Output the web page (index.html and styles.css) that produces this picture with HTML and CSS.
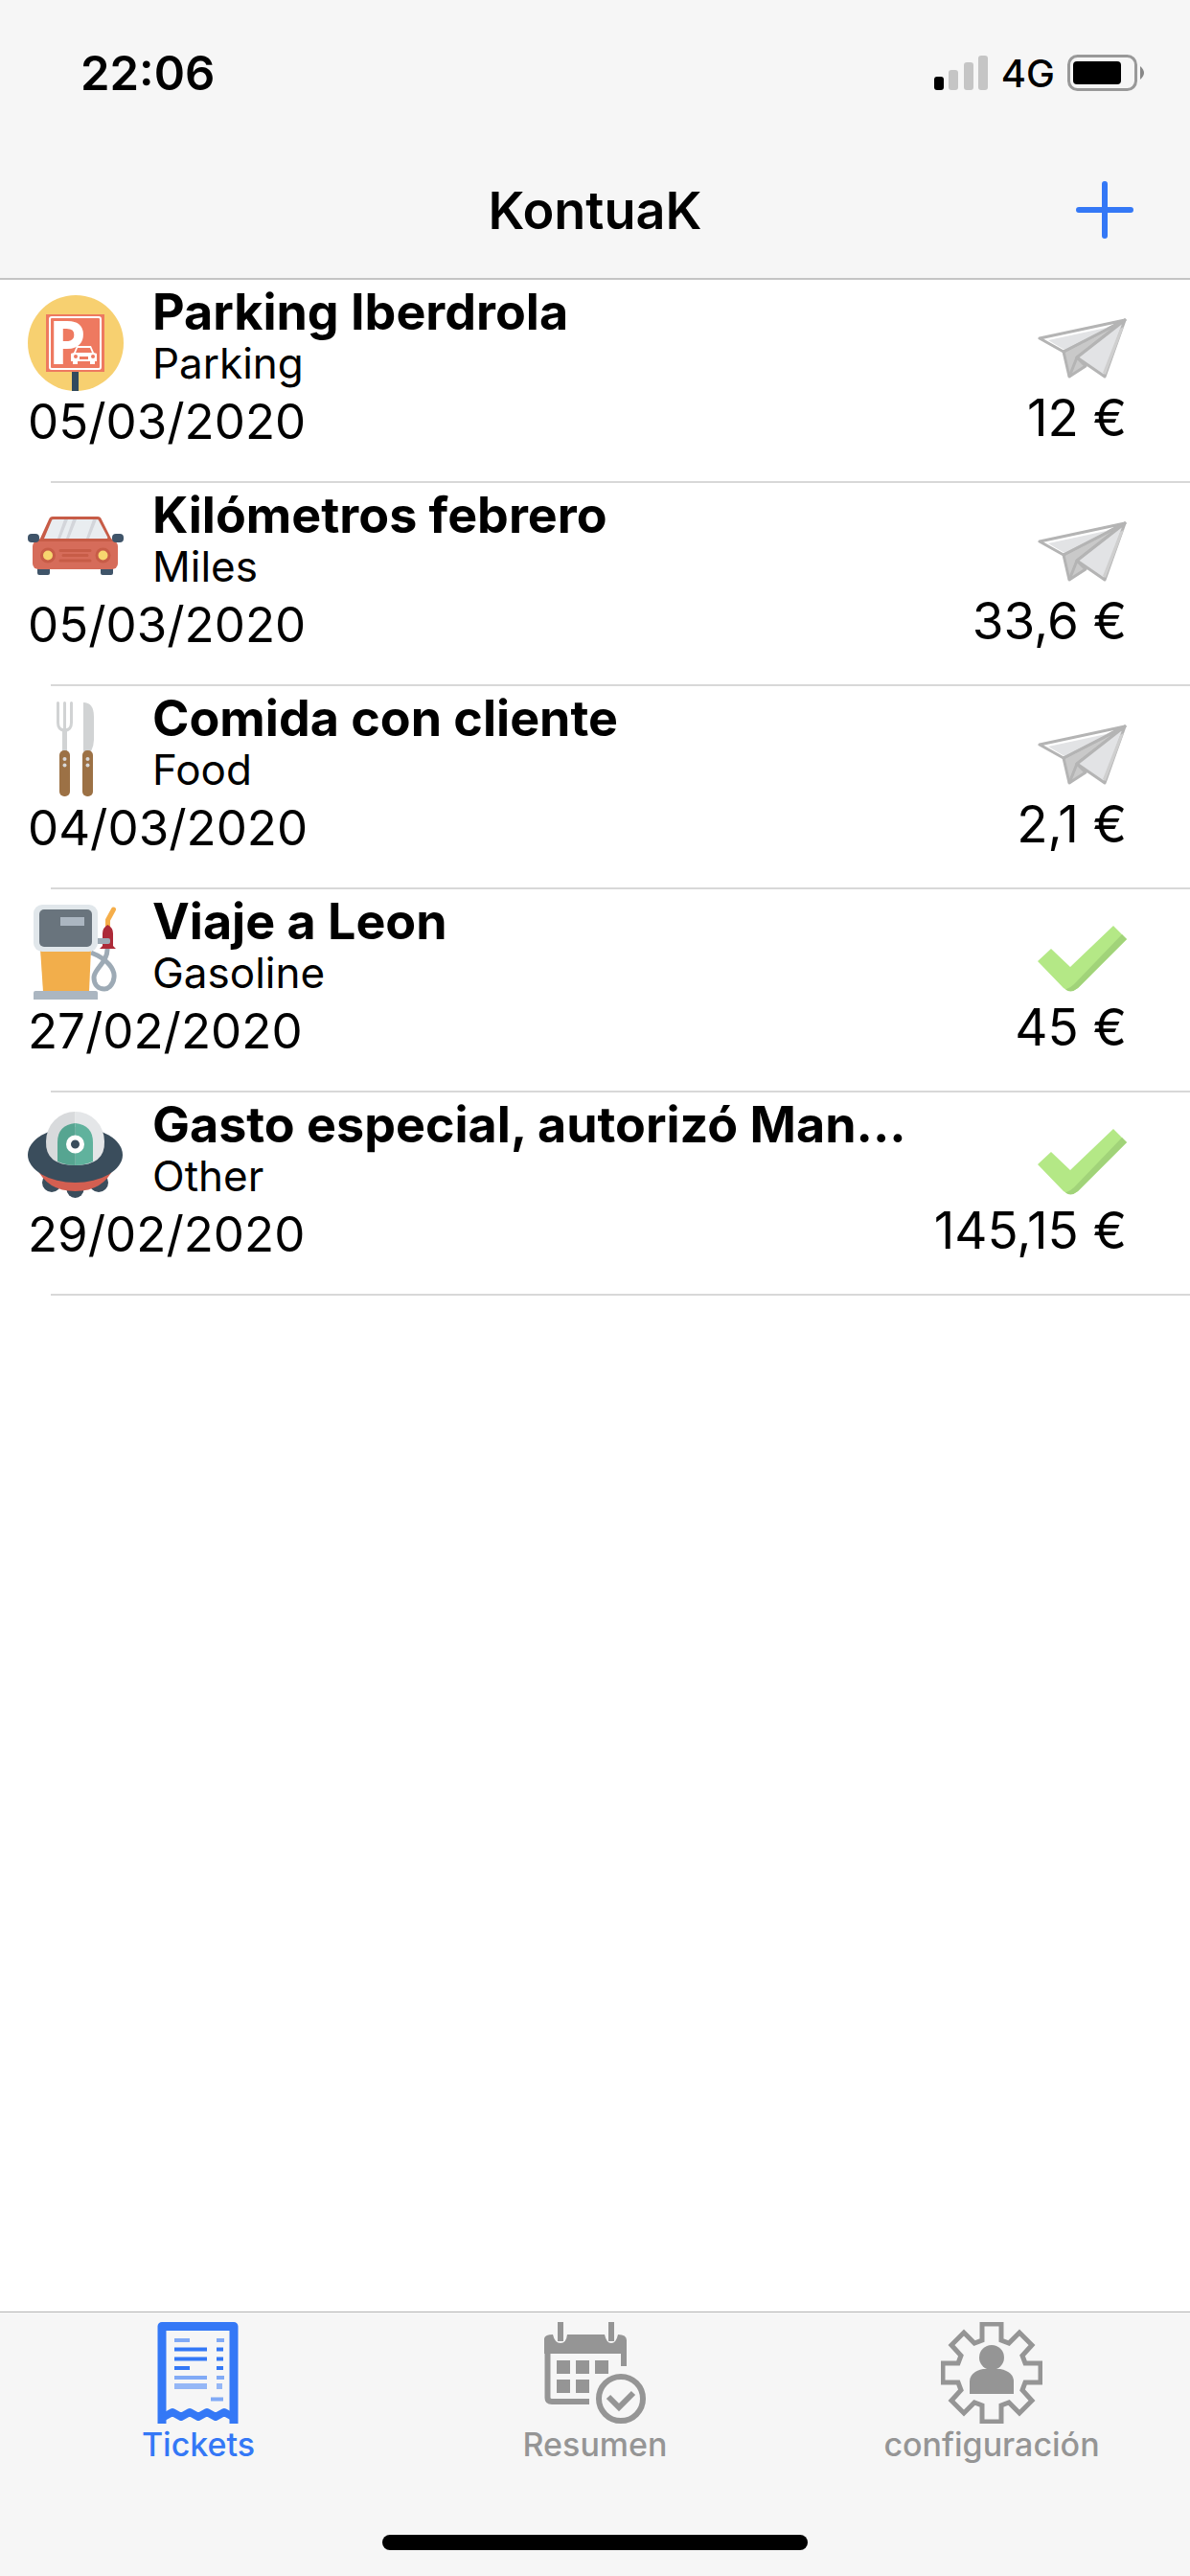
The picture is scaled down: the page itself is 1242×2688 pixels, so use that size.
FILE: index.html
```html
<!DOCTYPE html>
<html lang="es">
	<head>
		<meta charset="UTF-8">
		<meta name="viewport" content="width=device-width, initial-scale=1">
		<title>KontuaK</title>
		<link rel="stylesheet" href="styles.css">
	</head>
	<body>
		<!-- shared icons -->
		<svg class="defs" width="0" height="0">
			<symbol id="plane" viewBox="0 0 93 86">
				<g stroke="#b4b4b4" stroke-width="3" stroke-linejoin="round">
					<path fill="#fff" d="M2 36L91 17L27 50z"/>
					<path fill="#c9c9c9" d="M27 50L91 17L41 56L50 65L33 76z"/>
					<path fill="#e2e3e5" d="M41 56L91 17L70 76z"/>
				</g>
				<path fill="#e2e3e5" d="M11 38L76 24L28 48z"/>
				<path fill="none" stroke="#b4b4b4" stroke-width="3" d="M33 76L41 56M91 17L27 50"/>
				<path fill="#cfcfcf" d="M86 26L68 72L71 74L90 24z"/>
			</symbol>
			<symbol id="check" viewBox="0 0 93 86">
				<path fill="#b4e886" d="M0 50L14 37L34 56L79 13L93 27L42 78Q34 84 27 78z"/>
				<path fill="#a1d379" d="M88 22L93 27L42 78Q35 84 29 79.500Q34 78 38 74z"/>
			</symbol>
		</svg>

		<header class="header">
			<div class="status">
				<span class="time">22:06</span>
				<div class="status-right">
					<svg class="signal" viewBox="0 0 57 36">
						<rect x="0" y="22" width="10" height="14" rx="3"/>
						<g fill="#c5c5c5">
							<rect x="15" y="15" width="10" height="21" rx="3"/>
							<rect x="31" y="7" width="10" height="29" rx="3"/>
							<rect x="46" y="0" width="10" height="36" rx="3"/>
						</g>
					</svg>
					<span class="network">4G</span>
					<svg class="battery" viewBox="0 0 82 38">
						<rect x="1.500" y="1.500" width="70" height="35" rx="9" fill="none" stroke="#999" stroke-width="3"/>
						<rect x="6" y="7" width="50" height="24" rx="4"/>
						<path d="M76 12Q84 19 76 26z" fill="#888"/>
					</svg>
				</div>
			</div>
			<div class="nav">
				<h1>KontuaK</h1>
				<button class="add" type="button" aria-label="Añadir">
					<svg viewBox="0 0 60 60"><path d="M30 3V57M3 30H57"/></svg>
				</button>
			</div>
		</header>

		<main class="main">
			<ul class="list">
				<li class="item">
					<div class="row">
						<div class="left">
							<div class="head">
								<svg class="icon" viewBox="0 0 100 100">
									<circle cx="50" cy="50" r="50" fill="#f7d070"/>
									<rect x="46" y="79" width="7" height="21" fill="#324a5e"/>
									<rect x="19" y="20" width="61" height="60" fill="#ee7960"/>
									<rect x="23" y="23" width="53" height="54" rx="2" fill="none" stroke="#fff" stroke-width="2"/>
									<text class="sign" x="22" y="72">P</text>
									<path fill="#fff" d="M45 61L48 60L51 53H66L69 60L72 61V69H70V72H65V69H52V72H47V69H45z"/>
									<path fill="#ee7960" d="M50 60L52 55H65L67 60zM54 64H63V67H54z"/>
									<circle cx="50" cy="64" r="2" fill="#ee7960"/>
									<circle cx="68" cy="64" r="2" fill="#ee7960"/>
								</svg>
								<div class="text">
									<h2>Parking Iberdrola</h2>
									<p>Parking</p>
								</div>
							</div>
							<time datetime="2020-03-05">05/03/2020</time>
						</div>
						<div class="right">
							<svg class="state"><use href="#plane"/></svg>
							<span class="amount">12 €</span>
						</div>
					</div>
				</li>
				<li class="item">
					<div class="row">
						<div class="left">
							<div class="head">
								<svg class="icon" viewBox="0 0 100 100">
									<path fill="#3f5469" d="M10 72H23V78Q23 80 21 80H12Q10 80 10 78zM76 72H89V78Q89 80 87 80H78Q76 80 76 78z"/>
									<path fill="#c75c47" d="M12 44L22 22Q23 19 26 19H73Q76 19 77 22L88 44V50H12z"/>
									<path fill="#e9edf0" d="M17 42L25 23Q25 22 27 22H72Q74 22 74 23L83 40Q84 42 82 42z"/>
									<path fill="#d3d5da" d="M38 22H42L34 42H31zM47 22H51L43 42H40zM68 22H72L64 42H61z"/>
									<rect x="5" y="44" width="89" height="30" rx="6" fill="#d66c5a"/>
									<path fill="#c75c47" d="M9 45L13 42H87L90 45z"/>
									<rect x="0" y="37" width="12" height="9" rx="4" fill="#3f5469"/>
									<rect x="88" y="37" width="12" height="9" rx="4" fill="#3f5469"/>
									<path fill="none" stroke="#c75c47" stroke-width="3" stroke-linecap="round" d="M34 54.500H65M37 59.500H62M34 65H65"/>
									<circle cx="21" cy="59.500" r="6.500" fill="#f7d66f" stroke="#c75c47" stroke-width="3"/>
									<circle cx="78.500" cy="59.500" r="6.500" fill="#f7d66f" stroke="#c75c47" stroke-width="3"/>
								</svg>
								<div class="text">
									<h2>Kilómetros febrero</h2>
									<p>Miles</p>
								</div>
							</div>
							<time datetime="2020-03-05">05/03/2020</time>
						</div>
						<div class="right">
							<svg class="state"><use href="#plane"/></svg>
							<span class="amount">33,6 €</span>
						</div>
					</div>
				</li>
				<li class="item">
					<div class="row">
						<div class="left">
							<div class="head">
								<svg class="icon" viewBox="0 0 100 100">
									<path fill="none" stroke="#d1d3d4" stroke-width="3" stroke-linecap="round" d="M31.500 1.500V22Q31.500 30 38.500 30T45.500 22V1.500M38.500 1.500V30"/>
									<path stroke="#d1d3d4" stroke-width="5" d="M38.500 28V53"/>
									<path fill="#d1d3d4" d="M58 1Q69 1 69 16V40Q69 46 66 52H58z"/>
									<rect x="33" y="51" width="11" height="48" rx="5" fill="#9c7145"/>
									<rect x="57" y="51" width="11" height="48" rx="5" fill="#9c7145"/>
									<g fill="#d8d8d8">
										<circle cx="38.500" cy="60" r="2"/>
										<circle cx="38.500" cy="66.500" r="2"/>
										<circle cx="62.500" cy="60" r="2"/>
										<circle cx="62.500" cy="66.500" r="2"/>
									</g>
								</svg>
								<div class="text">
									<h2>Comida con cliente</h2>
									<p>Food</p>
								</div>
							</div>
							<time datetime="2020-03-04">04/03/2020</time>
						</div>
						<div class="right">
							<svg class="state"><use href="#plane"/></svg>
							<span class="amount">2,1 €</span>
						</div>
					</div>
				</li>
				<li class="item">
					<div class="row">
						<div class="left">
							<div class="head">
								<svg class="icon" viewBox="0 0 100 100">
									<path fill="none" stroke="#9daab5" stroke-width="5" d="M66 50C84 57 91 68 90 76C89 85 83 88 80 88C74 88 69 84 69 76C69 67 84 60 83 45"/>
									<path fill="#f2ae4b" d="M13 46H66L64 91H16z"/>
									<rect x="6" y="0" width="67" height="49" rx="9" fill="#e1e7eb"/>
									<rect x="12" y="5" width="55" height="39" rx="5" fill="#69747d"/>
									<rect x="34" y="13" width="25" height="9" fill="#abb6c1"/>
									<path fill="#abb6c1" d="M6 99V92Q6 90 8 90H71Q73 90 73 92V99z"/>
									<path fill="none" stroke="#f5ae4a" stroke-width="5" stroke-linecap="round" stroke-linejoin="round" d="M89.500 5L83.500 16V24"/>
									<path fill="#ad2a38" d="M83.500 21Q89 24 89 30V43L92 46H75L78 43V30Q78 24 83.500 21z"/>
									<path fill="#9daab5" d="M73 35H84Q86 35 86 37V39Q86 41 84 41H73z"/>
								</svg>
								<div class="text">
									<h2>Viaje a Leon</h2>
									<p>Gasoline</p>
								</div>
							</div>
							<time datetime="2020-02-27">27/02/2020</time>
						</div>
						<div class="right">
							<svg class="state"><use href="#check"/></svg>
							<span class="amount">45 €</span>
						</div>
					</div>
				</li>
				<li class="item">
					<div class="row">
						<div class="left">
							<div class="head">
								<svg class="icon" viewBox="0 0 100 100">
									<g fill="#3a4d5c">
										<circle cx="25" cy="78" r="10"/>
										<circle cx="74" cy="78" r="10"/>
										<circle cx="49.500" cy="85" r="9"/>
									</g>
									<path fill="#d35f51" d="M9 62Q20 87 49.500 87T90 62z"/>
									<ellipse cx="49.500" cy="49" rx="49.500" ry="29" fill="#3a4d5c"/>
									<path fill="#d8dadc" d="M49.500 4A30.500 31 0 0 0 19 35Q18 60 49.500 60z"/>
									<path fill="#e4e6e8" d="M49.500 4A30.500 31 0 0 1 80 35Q81 60 49.500 60z"/>
									<path fill="#56a591" d="M49.500 16Q31 18 31 36V56Q40 60 49.500 60z"/>
									<path fill="#60b29d" d="M49.500 16Q68 18 68 36V56Q59 60 49.500 60z"/>
									<circle cx="49.500" cy="38" r="7" fill="#3a4d5c" stroke="#fff" stroke-width="5"/>
								</svg>
								<div class="text">
									<h2>Gasto especial, autorizó Man...</h2>
									<p>Other</p>
								</div>
							</div>
							<time datetime="2020-02-29">29/02/2020</time>
						</div>
						<div class="right">
							<svg class="state"><use href="#check"/></svg>
							<span class="amount">145,15 €</span>
						</div>
					</div>
				</li>
			</ul>
		</main>

		<footer class="footer">
			<nav class="tabs">
				<a class="tab active" href="#tickets">
					<svg viewBox="0 0 106 106">
						<path fill="none" stroke="currentColor" stroke-width="9" stroke-linejoin="round" d="M15 106V4.500H90V106"/>
						<path fill="none" stroke="currentColor" stroke-width="8" stroke-linejoin="round" d="M15 100L26 94L35 99L44 94L53 99L62 94L71 99L80 94L91 100"/>
						<g fill="none" stroke="currentColor" stroke-width="4">
							<path opacity=".6" d="M28 19H44M72 19H80M28 58H62M72 58H80M66 80.500H79"/>
							<path d="M28 28.500H62M28 38.500H62M28 48H44M72 28.500H79M72 38.500H79M72 48H79"/>
							<path opacity=".5" stroke-width="6" d="M28 67H62M72 67H78"/>
						</g>
					</svg>
					<span>Tickets</span>
				</a>
				<a class="tab" href="#resumen">
					<svg viewBox="0 0 106 106">
						<path fill="currentColor" d="M0 33V17Q1 13 9 13Q11 22 17 22T24 13H63Q65 22 70 22T77 13Q86 13 86 19V33z"/>
						<path fill="none" stroke="currentColor" stroke-width="6" d="M17 0V20M70 0V20M83 30V46M3.500 30V79Q3.500 83 8 83H47"/>
						<path fill="currentColor" d="M13 40h14v14h-14zM33 40h14v14h-14zM53 40h14v14h-14zM13 60h14v14h-14zM33 60h14v14h-14z"/>
						<circle cx="80" cy="80" r="23" fill="none" stroke="currentColor" stroke-width="6"/>
						<path fill="none" stroke="currentColor" stroke-width="6" d="M67 78L78 89L93 74"/>
					</svg>
					<span>Resumen</span>
				</a>
				<a class="tab" href="#configuracion">
					<svg viewBox="0 0 106 106">
						<path fill="none" stroke="currentColor" stroke-width="5" d="M43 2H63V19L71 22L82 11L95 24L85 35L88 43H104V63H88L85 71L95 82L82 95L71 84L63 87V104H43V87L35 84L24 95L11 82L21 71L18 63H2V43H18L21 35L11 24L24 11L35 22L43 19z"/>
						<circle cx="53" cy="37" r="13" fill="currentColor"/>
						<path fill="currentColor" d="M30 75V62Q30 52 44 49H62Q76 52 76 62V75z"/>
					</svg>
					<span>configuración</span>
				</a>
			</nav>
			<div class="home-bar"></div>
		</footer>
	</body>
</html>
```

FILE: styles.css
```css
* {
	margin: 0;
	padding: 0;
	box-sizing: border-box;
}
body {
	display: flex;
	flex-direction: column;
	min-height: 100vh;
	background: #fff;
	color: #000;
	font-family: Inter, "Liberation Sans", sans-serif;
}
svg {
	display: block;
	flex: none;
}
.defs {
	position: absolute;
}

/* status bar and title */
.header {
	padding-bottom: 4px;
	background: #f6f6f6;
	border-bottom: 2px solid #c4c4c4;
}
.status {
	display: flex;
	align-items: center;
	justify-content: space-between;
	height: 152px;
	padding: 0 46px 0 84px;
}
.time {
	font-size: 49px;
	font-weight: 600;
}
.status-right {
	display: flex;
	align-items: center;
	gap: 13px;
}
.signal {
	width: 57px;
	height: 36px;
}
.network {
	font-size: 40px;
	font-weight: 500;
}
.battery {
	width: 82px;
	height: 38px;
}
.nav {
	display: grid;
	grid-template-columns: 1fr auto 1fr;
	align-items: center;
	height: 134px;
	padding: 0 59px;
}
.nav h1 {
	grid-column: 2;
	font-size: 54px;
	font-weight: 600;
}
.add {
	justify-self: end;
	border: none;
	background: none;
}
.add svg {
	width: 60px;
	height: 60px;
	fill: none;
	stroke: #3478f6;
	stroke-width: 6;
	stroke-linecap: round;
}

/* ticket list */
.main {
	flex: 1;
}
.list {
	list-style: none;
}
.item::after {
	content: "";
	display: block;
	height: 2px;
	margin-left: 53px;
	background: #d8d8d8;
}
.row {
	display: flex;
	justify-content: space-between;
	padding: 6px 66px 30px 29px;
}
.left {
	flex: 1;
	min-width: 0;
}
.head {
	display: flex;
	gap: 30px;
}
.icon {
	width: 100px;
	height: 100px;
	margin-top: 10px;
}
.sign {
	fill: #fff;
	font-family: "Noto Sans", sans-serif;
	font-size: 62px;
	font-weight: 700;
}
.text {
	white-space: nowrap;
}
.text h2 {
	font-size: 52px;
	font-weight: 700;
	line-height: 56px;
}
.text p {
	font-size: 44px;
	line-height: 50px;
}
.left time {
	display: block;
	font-size: 51px;
	line-height: 64px;
}
.right {
	display: flex;
	flex-direction: column;
	align-items: flex-end;
	padding-top: 19px;
	white-space: nowrap;
}
.amount {
	font-size: 53px;
	line-height: 66px;
}
.state {
	width: 93px;
	height: 86px;
}

/* bottom tabs */
.footer {
	background: #f6f6f6;
	border-top: 1px solid #b4b4b4;
}
.tabs {
	display: flex;
	padding-top: 10px;
}
.tab {
	flex: 1;
	display: flex;
	flex-direction: column;
	align-items: center;
	color: #959595;
	font-size: 34px;
	font-weight: 500;
	line-height: 44px;
	text-decoration: none;
}
.tab.active {
	color: #3478f6;
}
.tab svg {
	width: 106px;
	height: 106px;
}
.home-bar {
	width: 444px;
	max-width: 60%;
	height: 16px;
	margin: 72px auto 27px;
	border-radius: 8px;
	background: #000;
}
```
